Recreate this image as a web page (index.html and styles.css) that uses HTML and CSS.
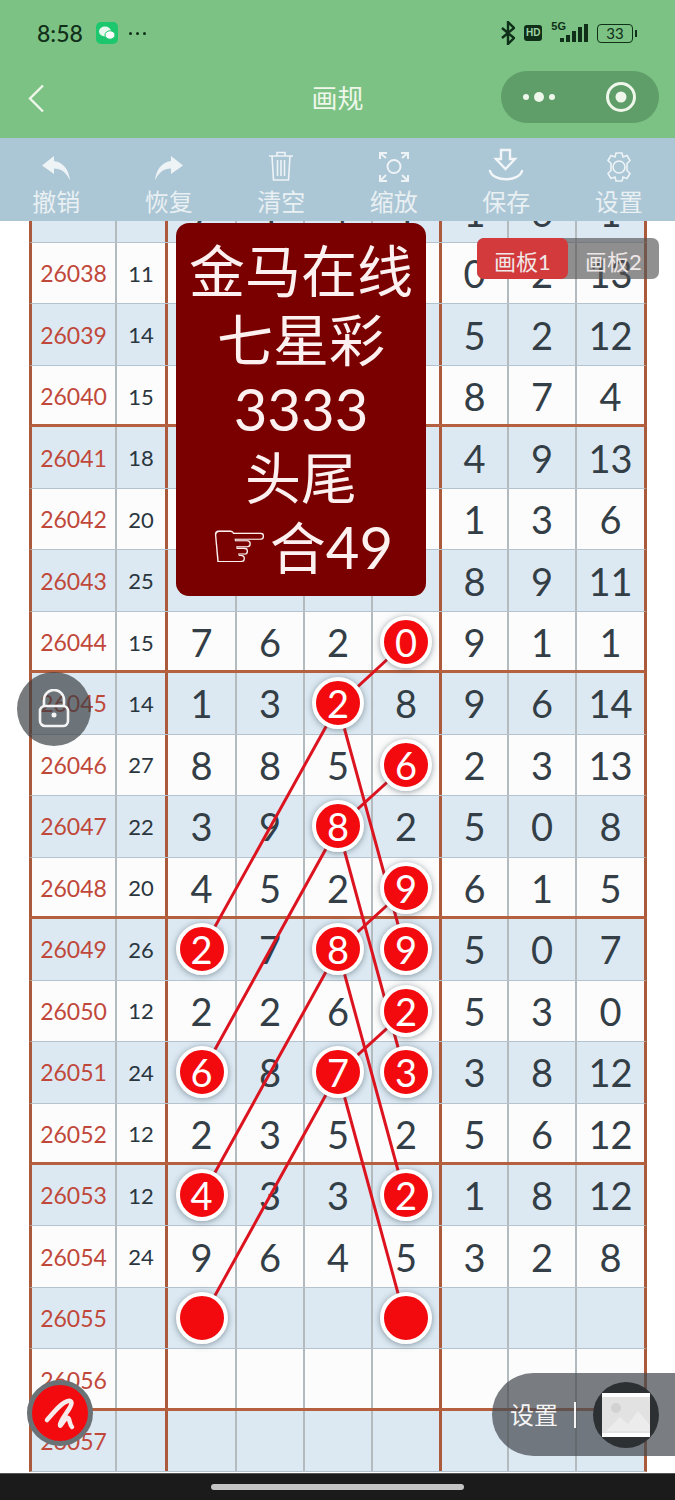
FILE: index.html
```html
<!DOCTYPE html>
<html>
<head>
    <title>画规</title>
    <meta name="viewport" content="width=device-width, initial-scale=1.0">
    <link rel="stylesheet" href="styles.css">
</head>
<body>
<div class="page">

    <div class="status">
        <div class="status-left">
            <span class="time">8:58</span>
            <svg class="wechat" width="22" height="22" viewBox="0 0 22 22">
                <rect width="22" height="22" rx="5" fill="#1cc76d"/>
                <ellipse cx="9" cy="9.5" rx="6" ry="5" fill="#e8f8ee"/>
                <ellipse cx="14" cy="13" rx="5" ry="4.2" fill="#fff" stroke="#1cc76d"/>
            </svg>
            <span class="more-dots"><i></i><i></i><i></i></span>
        </div>
        <div class="status-right">
            <svg width="14" height="24" viewBox="0 0 14 24" fill="none" stroke="#0f2f18" stroke-width="2.4">
                <path d="M1 7l12 10-6 6V1l6 6L1 17"/>
            </svg>
            <span class="hd">HD</span>
            <span class="net">5G</span>
            <span class="signal"><i class="s1"></i><i class="s2"></i><i class="s3"></i><i class="s4"></i><i class="s5"></i></span>
            <span class="battery">33</span>
            <span class="battery-tip"></span>
        </div>
    </div>

    <div class="nav">
        <svg class="back" width="17" height="29" viewBox="0 0 17 29" fill="none" stroke="#eef7ea" stroke-width="2.4">
            <path d="M15 1.5L2 14.5l13 13"/>
        </svg>
        <div class="nav-title">画规</div>
        <div class="capsule">
            <span class="cap-dots"><i></i><i class="big"></i><i></i></span>
            <svg width="32" height="32" viewBox="0 0 32 32">
                <circle cx="16" cy="16" r="13.5" fill="none" stroke="#eef7ea" stroke-width="3"/>
                <circle cx="16" cy="16" r="5.5" fill="#eef7ea"/>
            </svg>
        </div>
    </div>

    <div class="toolbar">
        <div class="tool">
            <svg width="32" height="28" viewBox="0 0 32 28"><path d="M14 2L2 11.5 14 20v-5.5c7 0 12 3.500 16 12-1-10-6-18-16-19.500z" fill="#eef3f6"/></svg>
            <span>撤销</span>
        </div>
        <div class="tool">
            <svg width="32" height="28" viewBox="0 0 32 28"><path d="M18 2l12 9.500L18 20v-5.500c-7 0-12 3.500-16 12 1-10 6-18 16-19.500z" fill="#eef3f6"/></svg>
            <span>恢复</span>
        </div>
        <div class="tool">
            <svg width="26" height="32" viewBox="0 0 26 32" fill="none" stroke="#eef3f6" stroke-width="1.600">
                <path d="M1 6h24M9 6V2.500h8V6M4 6l1.500 24h15L22 6M9.500 10v16M13 10v16M16.500 10v16"/>
            </svg>
            <span>清空</span>
        </div>
        <div class="tool">
            <svg width="30" height="30" viewBox="0 0 30 30" fill="none" stroke="#eef3f6" stroke-width="2">
                <circle cx="15" cy="14.500" r="6.500"/>
                <path d="M1 7V1h7M1 1l6 5M29 7V1h-7M29 1l-6 5M1 23v6h7M1 29l6-6M29 23v6h-7M29 29l-6-6"/>
            </svg>
            <span>缩放</span>
        </div>
        <div class="tool">
            <svg width="36" height="34" viewBox="0 0 36 34" fill="none" stroke="#f2f6f8" stroke-width="2.400" stroke-linecap="round">
                <path d="M13 2h9v9h5l-9.500 10L8 11h5zM2 23c3 11 29 11 32 0"/>
            </svg>
            <span>保存</span>
        </div>
        <div class="tool">
            <svg width="30" height="30" viewBox="0 0 30 30" fill="none" stroke="#eef3f6" stroke-width="1.600">
                <circle cx="15" cy="15" r="6"/>
                <path d="M12 1h6l1 4 4-1.500 3 5-3 3 0 7 3 3-3 5-4-1.500-1 4h-6l-1-4-4 1.500-3-5 3-3 0-7-3-3 3-5 4 1.500z"/>
            </svg>
            <span>设置</span>
        </div>
    </div>

    <div class="sheet">
        <div class="grid">
            <div class="row blue"><div class="c no">26037</div><div class="c sum">16</div><div class="c d">7</div><div class="c d">1</div><div class="c d">4</div><div class="c d">1</div><div class="c d">1</div><div class="c d">6</div><div class="c d">1</div></div>
            <div class="row"><div class="c no">26038</div><div class="c sum">11</div><div class="c d"></div><div class="c d"></div><div class="c d"></div><div class="c d"></div><div class="c d">0</div><div class="c d">2</div><div class="c d">13</div></div>
            <div class="row blue"><div class="c no">26039</div><div class="c sum">14</div><div class="c d"></div><div class="c d"></div><div class="c d"></div><div class="c d"></div><div class="c d">5</div><div class="c d">2</div><div class="c d">12</div></div>
            <div class="row sep"><div class="c no">26040</div><div class="c sum">15</div><div class="c d"></div><div class="c d"></div><div class="c d"></div><div class="c d"></div><div class="c d">8</div><div class="c d">7</div><div class="c d">4</div></div>
            <div class="row blue"><div class="c no">26041</div><div class="c sum">18</div><div class="c d"></div><div class="c d"></div><div class="c d"></div><div class="c d"></div><div class="c d">4</div><div class="c d">9</div><div class="c d">13</div></div>
            <div class="row"><div class="c no">26042</div><div class="c sum">20</div><div class="c d"></div><div class="c d"></div><div class="c d"></div><div class="c d"></div><div class="c d">1</div><div class="c d">3</div><div class="c d">6</div></div>
            <div class="row blue"><div class="c no">26043</div><div class="c sum">25</div><div class="c d"></div><div class="c d"></div><div class="c d"></div><div class="c d"></div><div class="c d">8</div><div class="c d">9</div><div class="c d">11</div></div>
            <div class="row sep"><div class="c no">26044</div><div class="c sum">15</div><div class="c d">7</div><div class="c d">6</div><div class="c d">2</div><div class="c d"><b class="ball">0</b></div><div class="c d">9</div><div class="c d">1</div><div class="c d">1</div></div>
            <div class="row blue"><div class="c no">26045</div><div class="c sum">14</div><div class="c d">1</div><div class="c d">3</div><div class="c d"><b class="ball">2</b></div><div class="c d">8</div><div class="c d">9</div><div class="c d">6</div><div class="c d">14</div></div>
            <div class="row"><div class="c no">26046</div><div class="c sum">27</div><div class="c d">8</div><div class="c d">8</div><div class="c d">5</div><div class="c d"><b class="ball">6</b></div><div class="c d">2</div><div class="c d">3</div><div class="c d">13</div></div>
            <div class="row blue"><div class="c no">26047</div><div class="c sum">22</div><div class="c d">3</div><div class="c d">9</div><div class="c d"><b class="ball">8</b></div><div class="c d">2</div><div class="c d">5</div><div class="c d">0</div><div class="c d">8</div></div>
            <div class="row sep"><div class="c no">26048</div><div class="c sum">20</div><div class="c d">4</div><div class="c d">5</div><div class="c d">2</div><div class="c d"><b class="ball">9</b></div><div class="c d">6</div><div class="c d">1</div><div class="c d">5</div></div>
            <div class="row blue"><div class="c no">26049</div><div class="c sum">26</div><div class="c d"><b class="ball">2</b></div><div class="c d">7</div><div class="c d"><b class="ball">8</b></div><div class="c d"><b class="ball">9</b></div><div class="c d">5</div><div class="c d">0</div><div class="c d">7</div></div>
            <div class="row"><div class="c no">26050</div><div class="c sum">12</div><div class="c d">2</div><div class="c d">2</div><div class="c d">6</div><div class="c d"><b class="ball">2</b></div><div class="c d">5</div><div class="c d">3</div><div class="c d">0</div></div>
            <div class="row blue"><div class="c no">26051</div><div class="c sum">24</div><div class="c d"><b class="ball">6</b></div><div class="c d">8</div><div class="c d"><b class="ball">7</b></div><div class="c d"><b class="ball">3</b></div><div class="c d">3</div><div class="c d">8</div><div class="c d">12</div></div>
            <div class="row sep"><div class="c no">26052</div><div class="c sum">12</div><div class="c d">2</div><div class="c d">3</div><div class="c d">5</div><div class="c d">2</div><div class="c d">5</div><div class="c d">6</div><div class="c d">12</div></div>
            <div class="row blue"><div class="c no">26053</div><div class="c sum">12</div><div class="c d"><b class="ball">4</b></div><div class="c d">3</div><div class="c d">3</div><div class="c d"><b class="ball">2</b></div><div class="c d">1</div><div class="c d">8</div><div class="c d">12</div></div>
            <div class="row"><div class="c no">26054</div><div class="c sum">24</div><div class="c d">9</div><div class="c d">6</div><div class="c d">4</div><div class="c d">5</div><div class="c d">3</div><div class="c d">2</div><div class="c d">8</div></div>
            <div class="row blue"><div class="c no">26055</div><div class="c sum"></div><div class="c d"><b class="ball"></b></div><div class="c d"></div><div class="c d"></div><div class="c d"><b class="ball"></b></div><div class="c d"></div><div class="c d"></div><div class="c d"></div></div>
            <div class="row sep"><div class="c no">26056</div><div class="c sum"></div><div class="c d"></div><div class="c d"></div><div class="c d"></div><div class="c d"></div><div class="c d"></div><div class="c d"></div><div class="c d"></div></div>
            <div class="row blue"><div class="c no">26057</div><div class="c sum"></div><div class="c d"></div><div class="c d"></div><div class="c d"></div><div class="c d"></div><div class="c d"></div><div class="c d"></div><div class="c d"></div></div>
        </div>

        <!-- lines between the balls, in page coordinates -->
        <svg class="lines" width="675" height="1252" viewBox="0 221 675 1252" fill="none" stroke="#dc1420" stroke-width="3">
            <path d="M405 643L338 705L202 950M338 705L405 950"/>
            <path d="M405 766L338 827L202 1073M338 827L405 1073"/>
            <path d="M405 889L338 950L202 1196M338 950L405 1196"/>
            <path d="M405 1012L338 1073L202 1319M338 1073L405 1319"/>
        </svg>
    </div>

    <div class="card">
        <div>金马在线</div>
        <div>七星彩</div>
        <div class="card-num">3333</div>
        <div>头尾</div>
        <div><span class="hand">☞</span>合<span class="card-num">49</span></div>
    </div>

    <div class="tabs">
        <span class="tab on">画板1</span>
        <span class="tab">画板2</span>
    </div>

    <div class="lock">
        <svg width="32" height="40" viewBox="0 0 32 40" fill="none" stroke="#f4f4f4" stroke-width="2.600">
            <path d="M6 17V11a10 10 0 0 1 20 0v6"/>
            <rect x="2" y="17" width="28" height="20" rx="5"/>
            <circle cx="16" cy="26" r="2.500" fill="#f4f4f4" stroke="none"/>
        </svg>
    </div>

    <div class="pen">
        <svg width="40" height="40" viewBox="0 0 40 40" fill="none" stroke="#f6eaea" stroke-width="4.500" stroke-linecap="round" stroke-linejoin="round">
            <path d="M7 27C14 19 22 9 28 8c5-1 4 3 1 8-3 5-9 12-9 16 0 3 4-6 7-7 3-1 2 6 5 9"/>
        </svg>
    </div>

    <div class="float-set">
        <span class="float-text">设置</span>
        <span class="float-bar"></span>
        <span class="float-pic">
            <svg width="48" height="44" viewBox="0 0 48 44">
                <rect width="48" height="44" fill="#fff"/>
                <rect y="4" width="48" height="36" fill="#e2e2e2"/>
                <circle cx="14" cy="15" r="5" fill="#d2d2d2"/>
                <path d="M4 38l14-14 8 7 10-13 12 14v6z" fill="#ececec"/>
            </svg>
        </span>
    </div>

    <div class="home-bar"><span></span></div>
</div>
</body>
</html>
```

FILE: styles.css
```css
html, body {
    margin: 0;
    background: #fff;
}
.page {
    position: relative;
    width: 675px;
    height: 1500px;
    overflow: hidden;
    display: flex;
    flex-direction: column;
    font-family: Lato, "Noto Sans CJK SC", sans-serif;
}

/* status bar */
.status {
    height: 66px;
    background: #7cc284;
    display: flex;
    justify-content: space-between;
    align-items: center;
    padding: 0 38px 0 37px;
    color: #0f2f18;
}
.status-left, .status-right {
    display: flex;
    align-items: center;
}
.time {
    font-size: 23px;
    font-weight: 500;
    width: 59px;
}
.more-dots {
    display: flex;
    gap: 4px;
    margin-left: 11px;
}
.more-dots i {
    width: 3px;
    height: 3px;
    border-radius: 50%;
    background: #0f2f18;
}
.hd {
    margin-left: 9px;
    width: 18px;
    height: 16px;
    border-radius: 3px;
    background: #0f2f18;
    color: #9fd4a6;
    font: bold 10px/16px "Liberation Sans", sans-serif;
    text-align: center;
}
.net {
    margin-left: 9px;
    font: bold 11px/1 "Liberation Sans", sans-serif;
    align-self: flex-start;
}
.signal {
    display: flex;
    align-items: flex-end;
    gap: 2px;
    height: 18px;
    margin-left: -6px;
}
.signal i {
    width: 4px;
    background: #0f2f18;
}
.s1 { height: 4px; }
.s2 { height: 7px; }
.s3 { height: 11px; }
.s4 { height: 15px; }
.s5 { height: 18px; }
.battery {
    margin-left: 9px;
    width: 34px;
    height: 17px;
    border: 1.5px solid #0f2f18;
    border-radius: 4px;
    font-size: 15px;
    line-height: 17px;
    text-align: center;
}
.battery-tip {
    width: 2px;
    height: 7px;
    margin-left: 2px;
    background: #0f2f18;
}

/* nav */
.nav {
    height: 72px;
    background: #7cc284;
    display: grid;
    grid-template-columns: 1fr auto 1fr;
    align-items: center;
    padding: 0 16px 0 28px;
    box-sizing: border-box;
}
.back {
    margin-bottom: 8px;
}
.nav-title {
    font-size: 26px;
    color: #eef7ea;
    margin-bottom: 12px;
    margin-left: -12px;
}
.capsule {
    justify-self: end;
    width: 158px;
    height: 52px;
    margin-bottom: 10px;
    border-radius: 26px;
    background: #5f9d69;
    display: flex;
    align-items: center;
    justify-content: space-between;
    padding: 0 22px;
    box-sizing: border-box;
}
.cap-dots {
    display: flex;
    align-items: center;
    gap: 5px;
}
.cap-dots i {
    width: 6px;
    height: 6px;
    border-radius: 50%;
    background: #eef7ea;
}
.cap-dots .big {
    width: 10px;
    height: 10px;
}

/* toolbar */
.toolbar {
    height: 83px;
    background: #abc6d5;
    display: flex;
}
.tool {
    flex: 1;
    display: flex;
    flex-direction: column;
    align-items: center;
    justify-content: flex-end;
    color: #e9f0f3;
    font-size: 24px;
    line-height: 28px;
    padding-bottom: 5px;
    box-sizing: border-box;
}
.tool svg {
    margin-bottom: 6px;
}

/* sheet */
.sheet {
    position: relative;
    height: 1252px;
    overflow: hidden;
}
.grid {
    margin: -39.5px 0 0 29px;
    width: 618px;
}
.row {
    display: grid;
    grid-template-columns: 85px 51px 69px 68px 68px 69px 67px 68px 67px;
    height: 61.47px;
    box-sizing: border-box;
    border-left: 3px solid #ab5b3c;
    border-right: 3px solid #ab5b3c;
    border-bottom: 1px solid #b4c3cd;
    background: #fcfcfc;
}
.blue {
    background: #dce9f3;
}
.sep {
    border-bottom: 3px solid #b5603e;
}
.sep .c {
    padding-top: 2px;
}
.c {
    display: flex;
    align-items: center;
    justify-content: center;
    border-right: 2px solid #b4bbbf;
    min-width: 0;
}
.c:nth-child(2), .c:nth-child(6) {
    border-right: 3px solid #ab5b3c;
}
.c:last-child {
    border-right: 0;
}
.no {
    color: #c0483a;
    font-size: 23px;
}
.sum {
    color: #2a363e;
    font-size: 22px;
}
.d {
    color: #333e46;
    font-size: 38px;
}
.ball {
    position: relative;
    z-index: 2;
    width: 44px;
    height: 44px;
    flex: none;
    border: 4.500px solid #fff;
    border-radius: 50%;
    background: #f30a0f;
    color: #fff;
    font-weight: 400;
    display: flex;
    align-items: center;
    justify-content: center;
    box-shadow: 0 1px 6px rgba(40, 60, 70, .5);
}
.lines {
    position: absolute;
    top: 0;
    left: 0;
    z-index: 1;
}

/* things lying over the sheet */
.card {
    position: absolute;
    left: 176px;
    top: 223px;
    width: 250px;
    height: 373px;
    z-index: 3;
    box-sizing: border-box;
    padding-top: 13px;
    border-radius: 13px;
    background: #7a0000;
    color: #fdf0f0;
    font-size: 56px;
    line-height: 69px;
    text-align: center;
}
.card-num {
    font-size: 58px;
}
.hand {
    font-family: "DejaVu Sans", sans-serif;
    font-size: 68px;
    line-height: 0;
}
.tabs {
    position: absolute;
    left: 477px;
    top: 238px;
    width: 182px;
    height: 41px;
    z-index: 4;
    display: flex;
    border-radius: 7px;
    background: rgba(85, 85, 85, .65);
    color: #f0e8e8;
    font-size: 22px;
}
.tab {
    width: 91px;
    text-align: center;
    border-radius: 7px;
    line-height: 47px;
    height: 41px;
}
.tab.on {
    background: #d33a3c;
}
.lock {
    position: absolute;
    left: 17px;
    top: 672px;
    width: 74px;
    height: 74px;
    z-index: 4;
    border-radius: 50%;
    background: rgba(55, 60, 65, .68);
    display: flex;
    align-items: center;
    justify-content: center;
}
.pen {
    position: absolute;
    left: 27px;
    top: 1380px;
    width: 66px;
    height: 66px;
    z-index: 4;
    box-sizing: border-box;
    border: 5px solid #6b7276;
    border-radius: 50%;
    background: #f30a0f;
    display: flex;
    align-items: center;
    justify-content: center;
}
.float-set {
    position: absolute;
    left: 492px;
    top: 1373px;
    width: 183px;
    height: 83px;
    z-index: 4;
    border-radius: 42px 0 0 42px;
    background: rgba(70, 75, 80, .72);
    display: flex;
    align-items: center;
    color: #f4f4f4;
    font-size: 24px;
}
.float-text {
    margin-left: 18px;
    margin-bottom: 3px;
}
.float-bar {
    width: 2px;
    height: 26px;
    margin-left: 16px;
    background: #f4f4f4;
}
.float-pic {
    margin-left: 17px;
    width: 66px;
    height: 66px;
    border-radius: 50%;
    background: #2c3033;
    display: flex;
    align-items: center;
    justify-content: center;
}
.home-bar {
    height: 27px;
    background: #1b1b1b;
    position: relative;
    border-top: 1px solid #555;
    box-sizing: border-box;
}
.home-bar span {
    display: block;
    width: 253px;
    height: 6px;
    margin: 10px 0 0 211px;
    border-radius: 3px;
    background: #c4c4c4;
}
```
